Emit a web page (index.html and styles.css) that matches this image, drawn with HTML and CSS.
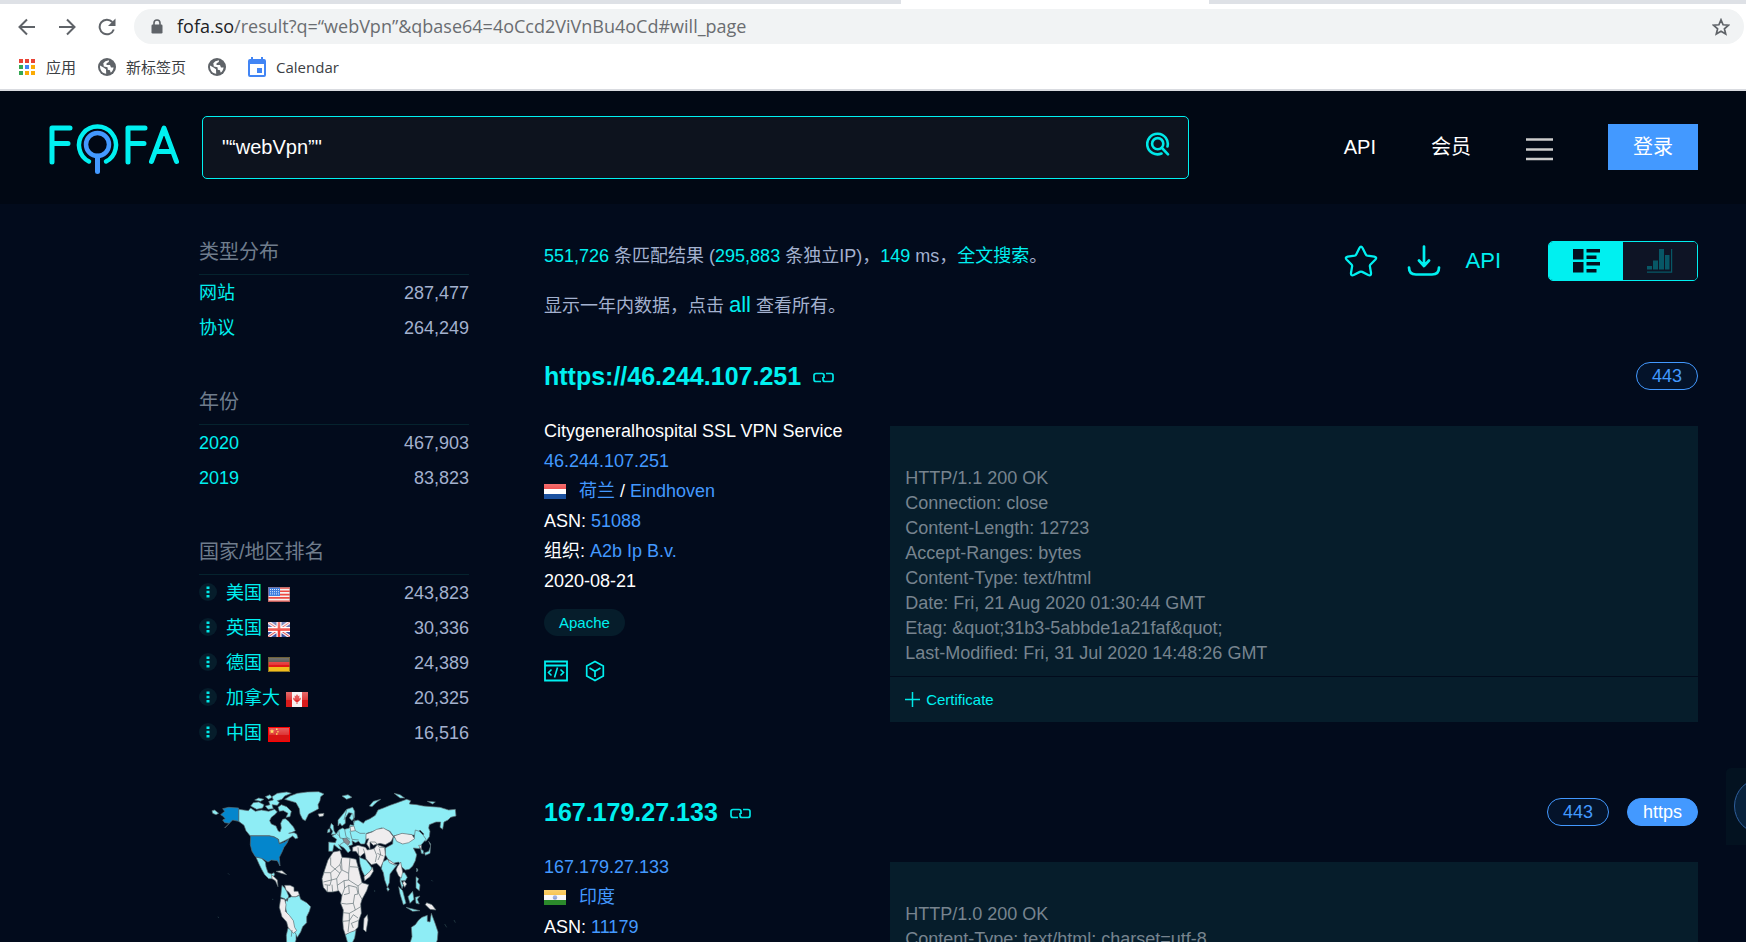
FILE: index.html
```html
<!DOCTYPE html>
<html lang="zh-CN">
<head>
<meta charset="utf-8">
<title>FOFA</title>
<link rel="stylesheet" href="styles.css">
</head>
<body>
<svg class="defs" aria-hidden="true">
  <defs>
    <symbol id="i-globe" viewBox="0 0 18 18"><circle cx="9" cy="9" r="9" fill="#5f6368"/><path d="M2 7.5 5.5 9.6 8 11.2 8.2 15.8C4.8 15.6 1.8 12.500 2 7.500ZM7.400 3.200 11 2.300 10.800 4 8.600 5.200 8.500 7 12 7 13 9.600 15.600 9.400C15.300 12 14 13.800 12.600 14.600L12 12.200 9.800 11.800 9.500 9.200 5.800 8.400 5.300 5.200Z" fill="#fff"/></symbol>
    <symbol id="i-link" viewBox="0 0 21 11"><path d="M8 9.500H3A2 2 0 0 1 1 7.500V3.500A2 2 0 0 1 3 1.500H9A2 2 0 0 1 11 3.500V6M13 1.500H18A2 2 0 0 1 20 3.500V7.500A2 2 0 0 1 18 9.500H12A2 2 0 0 1 10 7.500V5" fill="none" stroke="#00e6e6" stroke-width="1.700"/></symbol>
    <symbol id="i-dots" viewBox="0 0 18 18"><circle cx="9" cy="9" r="9" fill="#061d2b"/><path d="M7.500 3.500h3v2.500h-3zM7.500 7.800h3v2.500h-3zM7.500 12h3v2.500h-3z" fill="#00e8e8"/></symbol>
    <symbol id="i-code" viewBox="0 0 24 22"><path d="M1 1.500h22v19H1zM1 5.500h22" fill="none" stroke="#00f0f0" stroke-width="1.800"/><path d="M7.500 9.500 4.500 12.500 7.500 15.500M16.500 9.500 19.500 12.500 16.500 15.500M13.500 7.500 10.500 17.500" fill="none" stroke="#00f0f0" stroke-width="1.600"/></symbol>
    <symbol id="i-cube" viewBox="0 0 20 22"><path d="M10 1.500 18.300 6V16L10 20.500 1.700 16V6ZM4.500 8 10 11.300 15.500 8M10 11.300V17" fill="none" stroke="#00f0f0" stroke-width="1.700"/></symbol>
    <linearGradient id="gloss" x1="0" y1="0" x2="0" y2="1"><stop offset="0" stop-color="#fff" stop-opacity=".35"/><stop offset=".5" stop-color="#fff" stop-opacity=".15"/><stop offset=".55" stop-color="#fff" stop-opacity="0"/></linearGradient>
    <symbol id="f-us" viewBox="0 0 22 15"><path fill="#f7f0ee" d="M0 0h22v15H0z"/><path d="M0 1h22M0 4.300h22M0 7.600h22M0 10.900h22M0 14.200h22" stroke="#ec4a42" stroke-width="1.600"/><path fill="#3f7fe0" d="M0 0h12v9H0z"/><path d="M2 2.500h9M2 4.700h9M2 6.900h9" stroke="#dce8fa" stroke-dasharray="1 1"/><path fill="none" stroke="#a06a6a" stroke-opacity=".6" d="M.5.5h21v14H.5z"/></symbol>
    <symbol id="f-gb" viewBox="0 0 22 15"><path fill="#3a4f9c" d="M0 0h22v15H0z"/><path d="M0 0 22 15M22 0 0 15" stroke="#f2e8ee" stroke-width="3.500"/><path d="M0 0 22 15M22 0 0 15" stroke="#e0504c" stroke-width="1"/><path d="M11 0V15M0 7.500H22" stroke="#fff" stroke-width="5"/><path d="M11 0V15M0 7.500H22" stroke="#ee3b32" stroke-width="2.600"/><path fill="url(#gloss)" d="M0 0h22v15H0z"/></symbol>
    <symbol id="f-de" viewBox="0 0 22 15"><path fill="#33312c" d="M0 0h22v5H0z"/><path fill="#e01717" d="M0 5h22v5H0z"/><path fill="#f1bd1c" d="M0 10h22v5H0z"/><path fill="url(#gloss)" d="M0 0h22v15H0z"/><path fill="none" stroke="#6b5a20" stroke-opacity=".7" d="M.5.500h21v14H.5z"/></symbol>
    <symbol id="f-ca" viewBox="0 0 22 15"><path fill="#f5f0f0" d="M0 0h22v15H0z"/><path fill="#d81a1a" d="M0 0h6v15H0zM16 0h6v15h-6z"/><path fill="#e23030" d="m11 2 1.200 2 1.300-.5-.3 3 1.800-1-.3 2L12 10h-.6v2h-.8v-2H10L7.300 7.500 7 5.500l1.800 1-.3-3 1.300.500Z"/><path fill="url(#gloss)" d="M0 0h22v15H0z"/></symbol>
    <symbol id="f-cn" viewBox="0 0 22 15"><path fill="#d81414" d="M0 0h22v15H0z"/><path fill="#ffd43a" d="m4 2 .7 1.500 1.700.1-1.300 1.100.5 1.700L4 5.500 2.400 6.400l.5-1.700-1.300-1.100 1.700-.1ZM8 1.500h1.500V3H8zM9.300 4h1.200v1.500H9.300zM8 6.300h1.500v1.400H8z"/><path fill="url(#gloss)" d="M0 0h22v15H0z"/><path fill="none" stroke="#f00" d="M.5.500h21v14H.5z"/></symbol>
    <symbol id="f-nl" viewBox="0 0 22 15"><path fill="#ee2424" d="M0 0h22v5H0z"/><path fill="#fff" d="M0 5h22v5H0z"/><path fill="#1c52a0" d="M0 10h22v5H0z"/><path fill="url(#gloss)" d="M0 0h22v15H0z"/></symbol>
    <symbol id="f-in" viewBox="0 0 22 15"><path fill="#f5b521" d="M0 0h22v5H0z"/><path fill="#f6f6f6" d="M0 5h22v5H0z"/><path fill="#2b8a2b" d="M0 10h22v5H0z"/><circle cx="11" cy="7.500" r="2.200" fill="#8aa0d8"/><path fill="url(#gloss)" d="M0 0h22v15H0z"/></symbol>
  </defs>
</svg>

<div class="browser">
  <div class="tabstrip"><div class="tab-active"></div></div>
  <div class="toolbar">
    <button class="tool-btn" aria-label="后退"><svg width="18" height="18" viewBox="0 0 18 18"><path d="M17 9H2M9 1.500 1.500 9 9 16.500" fill="none" stroke="#5f6368" stroke-width="2"/></svg></button>
    <button class="tool-btn" aria-label="前进"><svg width="18" height="18" viewBox="0 0 18 18"><path d="M1 9H16M9 1.500 16.500 9 9 16.500" fill="none" stroke="#5f6368" stroke-width="2"/></svg></button>
    <button class="tool-btn" aria-label="重新加载"><svg width="18" height="18" viewBox="0 0 18 18"><path d="M15.800 11.500A7.300 7.300 0 1 1 14.300 4" fill="none" stroke="#5f6368" stroke-width="2"/><path d="M17.500.500V8H10Z" fill="#5f6368"/></svg></button>
    <div class="omnibox">
      <svg width="12" height="15" viewBox="0 0 12 15"><path d="M3 6V4a3 3 0 0 1 6 0v2" fill="none" stroke="#5f6368" stroke-width="1.600"/><rect x="0.500" y="5.500" width="11" height="9" rx="1.200" fill="#5f6368"/></svg>
      <div class="url" role="textbox" aria-label="地址" contenteditable="true" spellcheck="false"><span class="url-host">fofa.so</span>/result?q=“webVpn”&amp;qbase64=4oCcd2ViVnBu4oCd#will_page</div>
      <button class="plain" aria-label="收藏"><svg width="18" height="18" viewBox="0 0 18 18"><path d="m9 1.800 2.100 5 5.400.4-4.100 3.600 1.300 5.300L9 13.300 4.300 16.100l1.300-5.300L1.500 7.200l5.400-.4Z" fill="none" stroke="#5f6368" stroke-width="1.700"/></svg></button>
    </div>
  </div>
  <nav class="bookmarks">
    <a href="#apps"><svg width="18" height="18" viewBox="0 0 18 18"><path fill="#ea4335" d="M1 1h4v4H1zM7 1h4v4H7zM13 1h4v4h-4z"/><path fill="#34a853" d="M1 7h4v4H1zM1 13h4v4H1z"/><path fill="#4285f4" d="M7 7h4v4H7z"/><path fill="#fbab05" d="M13 7h4v4h-4zM7 13h4v4H7zM13 13h4v4h-4z"/></svg>应用</a>
    <a href="#newtab"><svg width="18" height="18"><use href="#i-globe"/></svg>新标签页</a>
    <a href="#blank" aria-label="书签"><svg width="18" height="18"><use href="#i-globe"/></svg></a>
    <a href="#calendar"><svg width="18" height="20" viewBox="0 0 18 20"><path d="M3 0h2v2h8V0h2v2h1a2 2 0 0 1 2 2v14a2 2 0 0 1-2 2H2a2 2 0 0 1-2-2V4a2 2 0 0 1 2-2h1ZM2 7v11h14V7Z" fill="#4285f4" fill-rule="evenodd"/><path fill="#4285f4" d="M9 11h5v5H9z"/></svg>Calendar</a>
  </nav>
</div>

<header class="header">
  <a class="logo" href="#home" aria-label="FOFA">
    <svg width="132" height="52" viewBox="0 0 132 52" fill="none" stroke="#00f0f0" stroke-width="5" stroke-linecap="round" stroke-linejoin="round">
      <path d="M4 38V4H22M4 19.500H20M80 38V4H97M80 19.500H96M103.500 37.500 116 4 128.500 37.500M108 27.500H124"/>
      <path d="M41 37.500A18.500 18.500 0 1 1 58 37.500" stroke-width="4.500"/>
      <circle cx="49.500" cy="20.500" r="11.500" stroke="#4399ff" stroke-width="4.500"/>
      <path d="M49.500 32V47.500" stroke="#4399ff" stroke-width="5"/>
    </svg>
  </a>
  <form class="search">
    <input class="search-input" type="text" aria-label="搜索" value="&quot;“webVpn”&quot;">
    <button class="plain" type="button" aria-label="搜索"><svg width="24" height="24" viewBox="0 0 24 24" fill="none" stroke="#00e8e8" stroke-width="2.600" stroke-linecap="round"><path d="M21.500 14.500A10.300 10.300 0 1 0 15.500 21.500"/><circle cx="11.700" cy="11.700" r="5.600"/><path d="M16 16 22 22.300"/></svg></button>
  </form>
  <nav class="nav">
    <a href="#api">API</a>
    <a href="#vip">会员</a>
    <button class="plain" aria-label="菜单"><svg width="27" height="24" viewBox="0 0 27 24"><path d="M0 2.500h27M0 12.500h27M0 22h27" stroke="#ccc" stroke-width="2.500"/></svg></button>
    <button class="login">登录</button>
  </nav>
</header>

<div class="page">
  <aside class="sidebar">
    <section class="facet">
      <h2>类型分布</h2>
      <ul>
        <li><a href="#site">网站</a><span>287,477</span></li>
        <li><a href="#proto">协议</a><span>264,249</span></li>
      </ul>
    </section>
    <section class="facet">
      <h2>年份</h2>
      <ul>
        <li><a href="#2020">2020</a><span>467,903</span></li>
        <li><a href="#2019">2019</a><span>83,823</span></li>
      </ul>
    </section>
    <section class="facet">
      <h2>国家/地区排名</h2>
      <ul>
        <li><svg class="dots" width="18" height="18"><use href="#i-dots"/></svg><a href="#us">美国<svg class="flag" width="22" height="15"><use href="#f-us"/></svg></a><span>243,823</span></li>
        <li><svg class="dots" width="18" height="18"><use href="#i-dots"/></svg><a href="#gb">英国<svg class="flag" width="22" height="15"><use href="#f-gb"/></svg></a><span>30,336</span></li>
        <li><svg class="dots" width="18" height="18"><use href="#i-dots"/></svg><a href="#de">德国<svg class="flag" width="22" height="15"><use href="#f-de"/></svg></a><span>24,389</span></li>
        <li><svg class="dots" width="18" height="18"><use href="#i-dots"/></svg><a href="#ca">加拿大<svg class="flag" width="22" height="15"><use href="#f-ca"/></svg></a><span>20,325</span></li>
        <li><svg class="dots" width="18" height="18"><use href="#i-dots"/></svg><a href="#cn">中国<svg class="flag" width="22" height="15"><use href="#f-cn"/></svg></a><span>16,516</span></li>
      </ul>
    </section>
    <svg class="map" viewBox="27 42 810 600" role="img" aria-label="世界地图" stroke="#5e6e72" stroke-width="2" stroke-linejoin="round">
      <g fill="#8eedf5">
        <path d="M146 118 175 122 182 114 196 124 214 120 236 124 254 118 262 126 254 134 244 142 239 152 244 162 258 168 264 182 270 186 274 174 272 160 278 148 286 146 296 154 302 162 310 170 316 182 304 188 296 190 312 188 320 192 324 204 316 206 308 198 296 206 284 212 268 220 266 208 252 200 238 197 180 197 168 182 162 166 146 154Z"/>
        <path d="M66 122 74 120 86 130 78 134 68 130Z"/>
        <path d="M182 108 190 98 206 96 222 104 218 114 200 118ZM226 108 240 104 236 94 250 90 246 80 262 70 290 66 304 70 284 78 276 88 262 92 268 98 262 106 246 104 250 116 234 118ZM264 112 274 104 290 110 304 124 300 140 288 142 294 130 280 122 268 124ZM194 90 206 84 222 88 212 94ZM226 80 240 74 246 82 236 88Z"/>
        <path d="M284 88 300 78 322 70 352 66 386 65 402 72 392 80 390 92 384 104 386 116 372 124 356 132 346 152 338 148 330 132 328 116 318 98 298 92Z"/>
        <path d="M198 262 214 264 226 276 228 290 234 308 244 312 252 308 254 314 246 326 236 326 224 314 216 300 208 284Z"/>
        <path d="M284 354 276 346 274 362 272 382 284 386 292 394 296 378 290 364ZM284 402 290 386 304 380 318 380 328 376 332 388 350 398 362 410 358 424 350 440 350 458 338 470 332 486 322 502 314 488 310 470 298 446 290 428Z"/>
        <path d="M294 474 306 478 318 492 318 510 310 530 304 560 298 590 290 570 290 520 289 496Z"/>
        <path d="M416 216 436 218 440 208 426 198 440 190 446 180 458 174 464 178 478 174 480 164 492 166 490 154 504 150 520 160 526 152 540 146 556 136 564 120 580 114 600 106 622 98 650 88 662 92 658 102 680 104 700 108 726 110 750 112 776 120 796 118 798 138 782 142 774 150 762 156 758 178 750 172 752 156 738 156 718 164 716 174 720 184 718 200 708 214 692 204 702 192 690 180 676 196 636 192 610 198 600 184 574 174 556 182 530 190 528 210 524 222 512 222 506 214 496 218 486 212 488 224 476 228 482 242 474 248 462 234 446 224 456 240 446 236 432 224 428 244 416 244Z"/>
        <path d="M444 168 444 150 456 136 470 118 488 112 494 124 494 142 486 152 478 144 486 130 476 128 466 144 466 160 456 168 450 160ZM424 160 430 166 432 182 438 192 424 194 428 184 420 172ZM414 178 420 176 420 186 412 188Z"/>
        <path d="M456 78 474 74 486 82 470 88ZM538 108 550 94 572 88 558 98 546 110ZM612 70 630 74 644 84 630 84ZM712 94 736 96 728 102Z"/>
        <path d="M586 234 608 222 610 200 636 220 672 206 676 180 688 184 700 196 708 208 694 224 688 236 670 234 680 254 676 272 668 288 658 298 646 300 636 292 626 276 610 280 594 268 586 254Z"/>
        <path d="M578 276 592 268 604 280 622 284 612 296 600 312 598 338 592 352 584 330 580 308 574 296ZM594 352 598 358 594 364 590 356Z"/>
        <path d="M508 262 528 270 546 294 546 304 524 318 516 302 510 282Z"/>
        <path d="M632 308 644 308 652 322 646 332 634 332 640 346 636 356 630 334ZM626 350 638 362 648 400 640 404 630 372ZM648 412 672 418 690 422 668 424ZM654 380 668 364 672 388 660 400ZM676 382 690 378 682 388 688 402 678 400ZM678 320 686 326 682 336 690 344 688 362 678 354ZM680 294 684 300 680 306ZM704 248 716 244 722 228 716 214 722 222 720 250 706 256ZM692 236 700 242 700 252 694 250Z"/>
        <path d="M664 472 676 464 686 450 696 442 712 436 712 454 720 456 724 430 736 462 744 486 742 510 734 530 720 560 700 540 670 545 660 520 666 500Z"/>
        <path d="M466 494 480 486 498 480 494 504 484 524 474 522Z"/>
      </g>
      <path fill="#0486cc" d="M146 114 146 154 128 150 118 160 104 174 118 160 104 158 98 150 106 146 98 138 92 134 104 124 98 116 116 112ZM182 198 238 198 254 202 264 208 268 222 284 216 296 208 292 218 282 232 276 246 268 262 270 288 262 272 244 270 234 276 218 266 196 260 186 244 181 224Z"/>
      <g fill="#efedee">
        <path d="M384 132 402 130 400 138 388 140Z"/>
        <path d="M244 314 252 320 262 330 264 350 256 332 246 326ZM258 304 276 302 290 314 274 310Z"/>
        <path d="M284 346 300 346 312 352 312 364 324 364 328 374 318 380 306 380 296 366 288 360ZM272 386 284 388 288 404 286 424 298 436 310 452 314 472 320 482 310 490 294 472 290 456 276 440 268 412Z"/>
        <path d="M414 270 430 246 450 242 456 262 480 264 498 268 504 290 510 314 516 338 536 344 530 362 516 388 512 402 514 430 506 452 504 472 494 482 478 488 466 494 460 476 458 450 460 420 452 400 456 376 446 362 428 366 412 366 400 352 396 326 404 300Z"/>
        <path d="M522 446 532 434 534 450 528 486 520 478Z"/>
        <path d="M488 232 504 226 526 232 532 240 552 236 562 224 584 232 586 254 580 274 572 292 560 280 544 284 528 266 524 248 510 260 498 244 488 244ZM522 320 540 304 548 292 550 304 540 320 524 332Z"/>
        <path d="M528 192 546 186 560 178 580 174 598 184 610 200 604 214 586 224 570 220 550 226 540 216 540 238 530 222 536 206 528 208Z"/>
        <path d="M612 198 636 190 666 194 674 206 656 218 638 222 620 214ZM622 290 632 276 638 306 634 324 626 318 618 300ZM642 332 650 342 644 352 638 340ZM594 268 612 280 616 286 598 278ZM710 398 726 404 738 420 720 418 706 404ZM480 170 492 168 496 182 482 184ZM686 226 694 226 694 240Z"/>
      </g>
      <path fill="#8a8b91" d="M458 206 470 204 480 216 474 226 462 216Z"/>
      <path fill="none" d="M400 308 422 308 450 284 456 262M422 262 422 286 450 310M422 308 424 330 400 336M450 284 454 302 440 326 424 330 420 346 404 344M454 266 456 300 476 310 480 264M480 290 508 292M476 310 476 330 504 348 516 338M440 326 442 346 462 332 476 330M442 346 444 362M412 366 412 346M428 366 426 344M462 332 464 354 456 376M464 354 476 346 500 352 504 372 494 374 490 400 470 402 454 400M504 348 506 370 516 388M476 346 478 370 462 374M490 400 496 420 478 430 460 428M496 420 512 410M478 430 478 452 458 454M478 452 474 486M478 452 490 434 504 444M490 474 484 460 504 452M552 236 560 256 556 276M562 250 580 258M524 248 520 236M540 216 556 216 568 232 584 232M568 236 572 252 564 270M504 232 506 256M464 178 468 200 480 208M446 180 450 204 462 206M480 184 486 208 506 210M496 182 510 190 526 190M488 130 494 158M470 120 462 150M440 190 450 200M462 216 450 224M304 500 306 480"/>
      <path fill="none" stroke="#2e4a50" d="M114 310 118 314M246 388 250 388M84 440 86 444M764 462 770 472M792 450 796 458M554 360 554 366M724 330 728 334"/>
    </svg>
  </aside>

  <main class="main">
    <div class="summary">
      <div class="summary-text">
        <p><b>551,726</b> 条匹配结果 (<b>295,883</b> 条独立IP)，<b>149</b> ms，<a href="#full">全文搜索</a>。</p>
        <p>显示一年内数据，点击 <a class="all" href="#all">all</a> 查看所有。</p>
      </div>
      <div class="actions">
        <button class="plain" aria-label="收藏"><svg width="34" height="32" viewBox="0 0 34 32"><path d="M15.300 3.200Q17 .200 18.700 3.200L21.800 9.400Q22.300 10.400 23.400 10.600L30.300 11.600Q33.500 12.300 31.200 14.800L26.500 19.500Q25.700 20.300 25.900 21.400L27 28Q27.200 31.200 24.300 30L18.200 26.900Q17 26.300 15.800 26.900L9.700 30Q6.800 31.200 7 28L8.100 21.400Q8.300 20.300 7.500 19.500L2.800 14.800Q.5 12.300 3.700 11.600L10.600 10.600Q11.700 10.400 12.200 9.400Z" fill="none" stroke="#00f0f0" stroke-width="2.300"/></svg></button>
        <button class="plain" aria-label="下载"><svg width="34" height="32" viewBox="0 0 34 32"><path d="M17 1.500V20M12 15.500 17 21 22 15.500M2 22.500Q2 29.500 9 29.500H25Q32 29.500 32 22.500" fill="none" stroke="#00f0f0" stroke-width="2.700" stroke-linecap="round" stroke-linejoin="round"/></svg></button>
        <a class="api" href="#api">API</a>
        <div class="toggle">
          <button class="on" aria-label="列表"><svg width="27" height="24" viewBox="0 0 27 24"><path d="M0 0h10.500v10.500H0zM0 13h10.500v10.500H0zM13.500 0h13.500v3.500H13.500zM13.500 6.500h10v3.500H13.500zM13.500 13h13.500v3.500H13.500zM13.500 20h10v3.500H13.500z" fill="#03101f"/></svg></button>
          <button aria-label="统计"><svg width="26" height="24" viewBox="0 0 26 24"><path d="M0 17h5v3.500H0zM6 11.500h5v9H6zM12 0h5v20.500h-5zM18 6h4.500v14.500h-4.500zM0 22.500h24V0h1.200v23.700H0z" fill="#075766"/></svg></button>
        </div>
      </div>
    </div>

    <article class="result">
      <div class="result-head">
        <h3><a href="#r1">https://46.244.107.251</a></h3>
        <svg class="link-icon" width="21" height="11"><use href="#i-link"/></svg>
        <div class="badges"><a class="badge" href="#443">443</a></div>
      </div>
      <div class="result-body">
        <div class="info">
          <p>Citygeneralhospital SSL VPN Service</p>
          <p><a href="#ip">46.244.107.251</a></p>
          <p><svg class="flag-lg" width="22" height="15"><use href="#f-nl"/></svg><a href="#nl">荷兰</a> / <a href="#ein">Eindhoven</a></p>
          <p>ASN: <a href="#asn">51088</a></p>
          <p>组织: <a href="#org">A2b Ip B.v.</a></p>
          <p>2020-08-21</p>
          <a class="tag" href="#apache">Apache</a>
          <div class="info-icons">
            <button class="plain" aria-label="源码"><svg width="24" height="22"><use href="#i-code"/></svg></button>
            <button class="plain" aria-label="组件"><svg width="20" height="22"><use href="#i-cube"/></svg></button>
          </div>
        </div>
        <div class="panel">
          <pre>

HTTP/1.1 200 OK
Connection: close
Content-Length: 12723
Accept-Ranges: bytes
Content-Type: text/html
Date: Fri, 21 Aug 2020 01:30:44 GMT
Etag: &amp;quot;31b3-5abbde1a21faf&amp;quot;
Last-Modified: Fri, 31 Jul 2020 14:48:26 GMT</pre>
          <button class="cert"><svg width="15" height="15" viewBox="0 0 15 15"><path d="M7.500 0V15M0 7.500H15" stroke="#00e8e8" stroke-width="1.500"/></svg>Certificate</button>
        </div>
      </div>
    </article>

    <article class="result">
      <div class="result-head">
        <h3><a href="#r2">167.179.27.133</a></h3>
        <svg class="link-icon" width="21" height="11"><use href="#i-link"/></svg>
        <div class="badges"><a class="badge" href="#443">443</a><a class="badge solid" href="#https">https</a></div>
      </div>
      <div class="result-body">
        <div class="info">
          <p><a href="#ip2">167.179.27.133</a></p>
          <p><svg class="flag-lg" width="22" height="15"><use href="#f-in"/></svg><a href="#in">印度</a></p>
          <p>ASN: <a href="#asn2">11179</a></p>
        </div>
        <div class="panel">
          <pre>

HTTP/1.0 200 OK
Content-Type: text/html; charset=utf-8</pre>
        </div>
      </div>
    </article>
  </main>
</div>

<div class="float-tool"><button aria-label="客服"></button></div>
</body>
</html>
```
FILE: styles.css
```css
* { box-sizing: border-box; }
html { scrollbar-width: none; background: #020b1c; }
body {
  margin: 0;
  font-family: "Liberation Sans", "Noto Sans CJK SC", sans-serif;
  font-size: 18px;
  color: #fff;
}
a { text-decoration: none; color: inherit; }
p, h2, h3, ul, pre { margin: 0; padding: 0; }
button { font-family: inherit; cursor: pointer; }
svg { flex: none; display: block; }
.defs { position: absolute; width: 0; height: 0; }
.plain { background: none; border: 0; padding: 0; }

/* Browser chrome */
.browser { background: #fff; border-bottom: 2px solid #d9dbe0; font-family: "Open Sans", "Noto Sans CJK SC", sans-serif; }
.tabstrip { height: 4px; background: #dee1e6; display: flex; padding-left: 901px; }
.tab-active { width: 308px; background: #fff; }
.toolbar { display: flex; align-items: center; padding: 5px 2px 5px 18px; }
.tool-btn { width: 18px; margin-right: 22px; padding: 0; border: 0; background: none; }
.omnibox {
  flex: 1; height: 35px; margin-left: -4px; padding: 0 14px 0 17px;
  display: flex; align-items: center; gap: 14px;
  background: #f1f3f4; border-radius: 18px;
}
.url { flex: 1; font-size: 18px; line-height: 26px; padding-bottom: 2px; color: #6a6d71; white-space: nowrap; outline: none; }
.url-host { color: #202124; }
.bookmarks { display: flex; align-items: center; gap: 22px; height: 40px; padding: 0 18px 4px; font-size: 15px; line-height: 20px; color: #3c4043; }
.bookmarks a { display: flex; align-items: center; gap: 10px; }

/* Site header */
.header { display: flex; align-items: center; height: 113px; padding: 0 48px; background: #010814; }
.logo { width: 154px; padding-top: 4px; }
.search {
  flex: 0 1 987px; height: 63px; padding: 0 18px 0 19px; display: flex; align-items: center;
  background: #0d131e; border: 1px solid #00f0f0; border-radius: 5px;
}
.search .plain { padding-bottom: 8px; }
.search-input { flex: 1; min-width: 0; padding: 0; border: 0; outline: 0; background: none; color: #fff; font: inherit; font-size: 20px; }
.nav { margin-left: auto; display: flex; align-items: center; gap: 55px; padding-bottom: 2px; font-size: 20px; line-height: 24px; }
.nav .plain { padding-top: 4px; }
.login { width: 90px; height: 46px; border: 0; background: #4399ff; color: #fff; font-size: 20px; line-height: 24px; }

/* Page columns */
.page { display: grid; grid-template-columns: 270px minmax(0, 1fr); column-gap: 75px; padding: 25px 48px 0 199px; }
.facet { margin-bottom: 34px; }
.facet h2 { height: 46px; line-height: 46px; font-size: 20px; font-weight: 400; color: #6f7c8c; border-bottom: 1px solid #05232e; }
.facet ul { list-style: none; }
.facet li { display: flex; align-items: center; height: 35px; line-height: 34px; }
.facet a { display: flex; align-items: center; color: #00f0f0; }
.facet li span { margin-left: auto; color: #a3b1cf; }
.dots { margin: 0 9px 2px 0; }
.flag { margin: 3px 0 0 6px; }
.map { width: 100%; height: auto; }

.summary { display: flex; height: 127px; }
.summary-text { color: #a3b1cf; }
.summary-text p { height: 49px; line-height: 54px; }
.summary-text b { font-weight: 400; color: #00f0f0; }
.summary-text a { color: #00f0f0; }
.summary-text .all { font-size: 22px; }
.actions { margin-left: auto; padding-top: 12px; display: flex; align-items: center; height: 52px; }
.actions .plain { margin-right: 29px; }
.api { margin: 0 47px 0 -4px; font-size: 22px; color: #00f0f0; }
.toggle { display: flex; width: 150px; height: 40px; border: 1px solid #00f0f0; border-radius: 5px; overflow: hidden; }
.toggle button { flex: 1; display: flex; align-items: center; justify-content: center; padding: 0; border: 0; background: #0e1425; }
.toggle .on { background: #00f0f0; }

/* Results */
.result { margin-bottom: 70px; }
.result-head { display: flex; align-items: center; height: 40px; margin-bottom: 20px; gap: 12px; }
.result-head h3 { font-size: 25px; line-height: 40px; color: #00f0f0; }
.link-icon { margin-top: 2px; }
.badges { margin-left: auto; display: flex; gap: 18px; }
.badge { height: 28px; line-height: 26px; padding: 0 15px; border: 1px solid #4399ff; border-radius: 14px; background: #04132a; color: #4399ff; }
.badge.solid { background: #4399ff; color: #fff; }
.result-body { display: grid; grid-template-columns: 3fr 7fr; }
.info p { height: 30px; line-height: 30px; white-space: nowrap; }
.info p a { color: #4399ff; }
.flag-lg { display: inline-block; margin-right: 13px; vertical-align: -2px; }
.tag { display: inline-block; margin-top: 13px; height: 27px; line-height: 27px; padding: 0 15px; border-radius: 14px; background: #061d2b; color: #00f0f0; font-size: 15px; }
.info-icons { display: flex; gap: 17px; margin-top: 24px; }
.panel { margin-top: 10px; background: #061d2b; }
.panel pre { padding: 15px 15px 10px; font: inherit; line-height: 25px; color: #77848f; white-space: pre-wrap; }
.cert {
  width: 100%; height: 46px; padding: 0 15px; display: flex; align-items: center; gap: 6px;
  border: 0; border-top: 1px solid #020b1c; background: none; color: #00f0f0; font-size: 15px;
}

/* Floating help button at the window edge */
.float-tool { position: fixed; right: 0; bottom: 97px; width: 20px; height: 77px; padding: 10px 0 0 8px; overflow: hidden; background: #031220; border-radius: 5px 0 0 0; }
.float-tool button { width: 56px; height: 56px; padding: 0; border: 1px solid #2f5f9c; border-radius: 50%; background: #08223c; }
```
